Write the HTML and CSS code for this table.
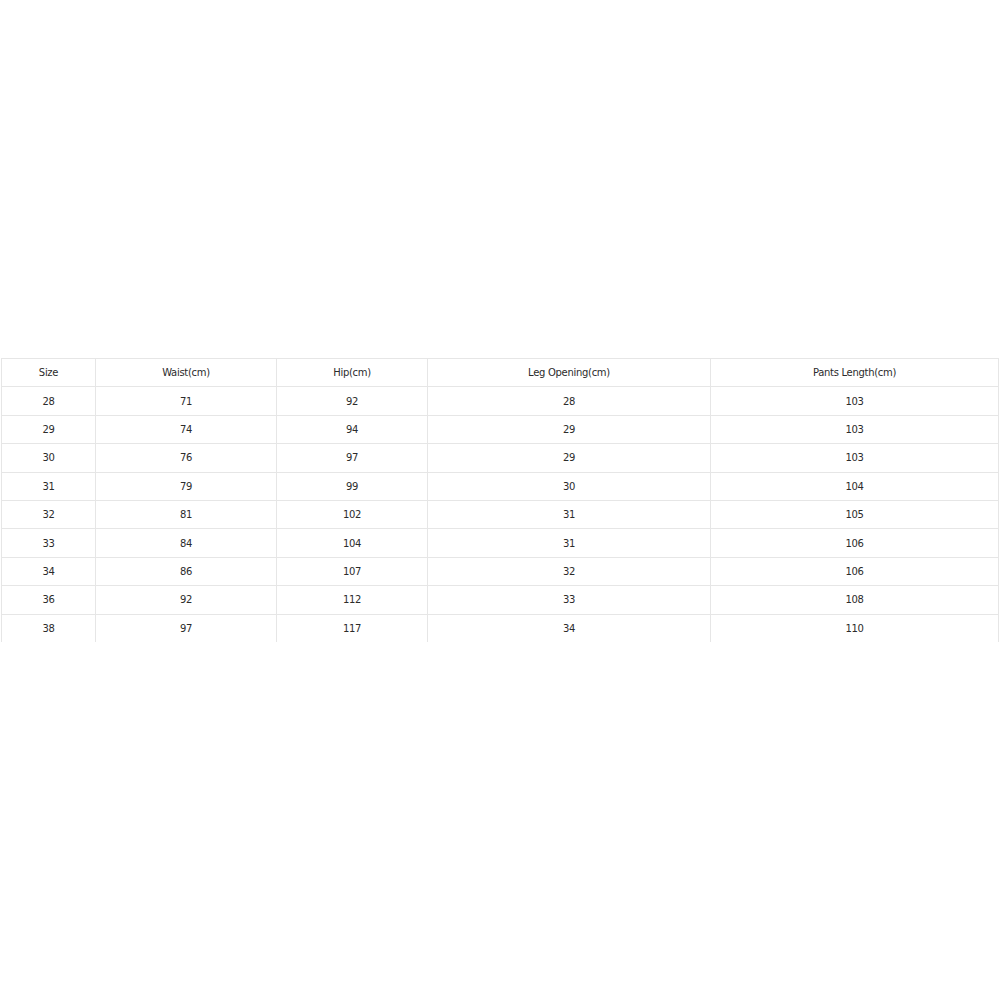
FILE: index.html
```html
<!DOCTYPE html>
<html>
<head>
<meta charset="utf-8">
<link rel="stylesheet" href="styles.css">
</head>
<body>
<div class="wrap">
<table class="size-table">
<colgroup>
<col class="c1"><col class="c2"><col class="c3"><col class="c4"><col class="c5">
</colgroup>
<tr><td>Size</td><td>Waist(cm)</td><td>Hip(cm)</td><td>Leg Opening(cm)</td><td>Pants Length(cm)</td></tr>
<tr><td>28</td><td>71</td><td>92</td><td>28</td><td>103</td></tr>
<tr><td>29</td><td>74</td><td>94</td><td>29</td><td>103</td></tr>
<tr><td>30</td><td>76</td><td>97</td><td>29</td><td>103</td></tr>
<tr><td>31</td><td>79</td><td>99</td><td>30</td><td>104</td></tr>
<tr><td>32</td><td>81</td><td>102</td><td>31</td><td>105</td></tr>
<tr><td>33</td><td>84</td><td>104</td><td>31</td><td>106</td></tr>
<tr><td>34</td><td>86</td><td>107</td><td>32</td><td>106</td></tr>
<tr><td>36</td><td>92</td><td>112</td><td>33</td><td>108</td></tr>
<tr><td>38</td><td>97</td><td>117</td><td>34</td><td>110</td></tr>
</table>
</div>
</body>
</html>
```
FILE: styles.css
```css
html, body {
  margin: 0;
  padding: 0;
  background: #fff;
}
.wrap {
  min-height: 100vh;
  display: flex;
  align-items: center;
  justify-content: center;
}
.size-table {
  width: 997px;
  table-layout: fixed;
  border-collapse: collapse;
  font-family: "DejaVu Sans", Verdana, sans-serif;
  font-size: 10px;
  letter-spacing: -0.3px;
  color: #2b2b2b;
}
.c1 { width: 94px; }
.c2 { width: 181px; }
.c3 { width: 151px; }
.c4 { width: 283px; }
.c5 { width: 288px; }
.size-table td {
  border: 1px solid #e6e6e6;
  height: 27.4px;
  padding: 0;
  text-align: center;
  vertical-align: middle;
}
.size-table tr:last-child td {
  border-bottom: none;
}
```
